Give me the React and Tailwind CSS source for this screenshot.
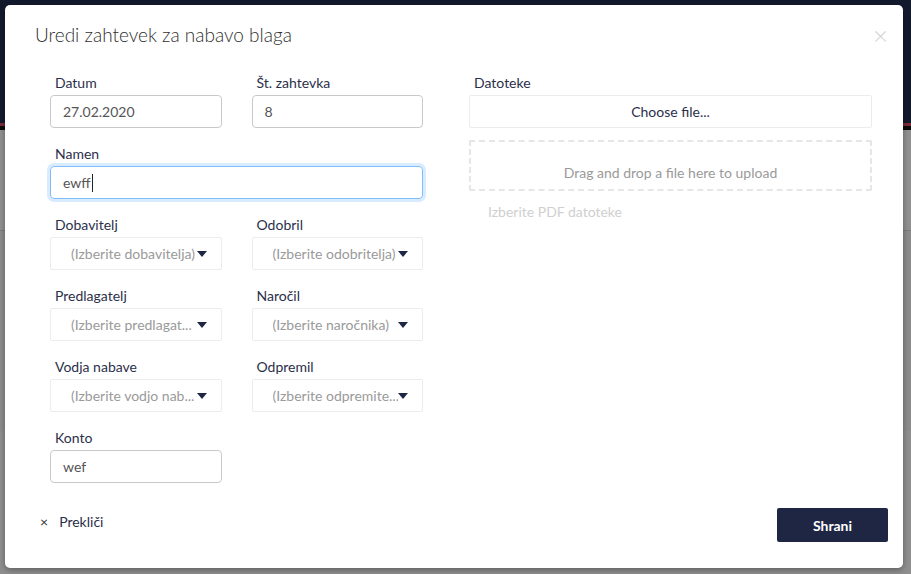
import React from "react";

function Caret() {
  return (
    <svg width="10" height="6" viewBox="0 0 10 6" className="shrink-0">
      <path d="M0 0 L10 0 L5 6 Z" fill="#1f2644" />
    </svg>
  );
}

function Field({ label, children }) {
  return (
    <div className="flex flex-col">
      <label className="pl-[5px] text-[14px] leading-[16px] text-[#2b2f4a] mb-[4px]">{label}</label>
      {children}
    </div>
  );
}

function TextInput({ value, focus }) {
  return (
    <div
      className={
        "h-[33px] rounded-[4px] border px-[12px] flex items-center text-[14px] text-[#555] " +
        (focus
          ? "border-[#80bdff] shadow-[0_0_0_3px_rgba(0,123,255,0.15)]"
          : "border-[#c9c9c9]")
      }
    >
      {value}
      {focus && <span className="w-px h-[18px] bg-[#222] ml-[1px]" />}
    </div>
  );
}

function Select({ placeholder }) {
  return (
    <div className="h-[33px] rounded-[2px] border border-[#ececec] pl-[20px] pr-[14px] flex items-center text-[14px] text-[#9a9a9a]">
      <span className="flex-1 whitespace-nowrap overflow-hidden">{placeholder}</span>
      <Caret />
    </div>
  );
}

export default function App() {
  return (
    <div
      className="relative w-[911px] h-[574px] overflow-hidden bg-[#8f8f8f]"
      style={{ fontFamily: "Lato, 'Noto Sans', sans-serif" }}
    >
      {/* backdrop page */}
      <div className="h-[123px] bg-[#141a2e]" />
      <div className="h-[3px] bg-[#7a2a38]" />
      <div className="h-[4px] bg-[#0b0b0b]" />
      <div className="h-[100px] bg-[#919191]" />
      <div className="h-px bg-[#7d7d7d]" />
      <div className="h-[200px] bg-[#8c8c8c]" />

      {/* modal */}
      <div className="absolute left-[5px] top-[5px] w-[898px] h-[563px] bg-white rounded-[5px] shadow-[0_2px_6px_rgba(0,0,0,0.35)] flex flex-col">
        <div className="flex items-start justify-between pl-[30px] pr-[15px] pt-[19px]">
          <h1 className="text-[19px] leading-[22px] text-[#2f2f2f] font-light">
            Uredi zahtevek za nabavo blaga
          </h1>
          <span className="text-[26px] leading-[22px] text-[#cfcfcf] font-light">×</span>
        </div>

        <div className="flex pl-[45px] pr-[31px] mt-[29px] gap-[46px]">
          {/* left */}
          <div className="w-[373px] flex flex-col gap-[18px]">
            <div className="grid grid-cols-2 gap-x-[30px]">
              <Field label="Datum">
                <TextInput value="27.02.2020" />
              </Field>
              <Field label="Št. zahtevka">
                <TextInput value="8" />
              </Field>
            </div>
            <Field label="Namen">
              <TextInput value="ewff" focus />
            </Field>
            <div className="grid grid-cols-2 gap-x-[30px] gap-y-[18px]">
              <Field label="Dobavitelj">
                <Select placeholder="(Izberite dobavitelja)" />
              </Field>
              <Field label="Odobril">
                <Select placeholder="(Izberite odobritelja)" />
              </Field>
              <Field label="Predlagatelj">
                <Select placeholder="(Izberite predlagat..." />
              </Field>
              <Field label="Naročil">
                <Select placeholder="(Izberite naročnika)" />
              </Field>
              <Field label="Vodja nabave">
                <Select placeholder="(Izberite vodjo nab..." />
              </Field>
              <Field label="Odpremil">
                <Select placeholder="(Izberite odpremite..." />
              </Field>
              <Field label="Konto">
                <TextInput value="wef" />
              </Field>
            </div>
          </div>

          {/* right */}
          <div className="flex-1 flex flex-col">
            <label className="pl-[5px] text-[14px] leading-[16px] text-[#2b2f4a] mb-[4px]">Datoteke</label>
            <div className="h-[33px] rounded-[2px] border border-[#ececec] flex items-center justify-center text-[14px] text-[#2b2f4a]">
              Choose file...
            </div>
            <div className="mt-[12px] h-[51px] border-2 border-dashed border-[#e6e6e6] rounded-[2px] flex items-end justify-center pb-[6px] text-[14px] text-[#9a9a9a]">
              Drag and drop a file here to upload
            </div>
            <div className="mt-[10px] pl-[19px] text-[14px] text-[#cfcfcf]">Izberite PDF datoteke</div>
          </div>
        </div>

        <div className="mt-auto mb-[26px] flex items-center justify-between pl-[35px] pr-[15px]">
          <div className="flex items-center gap-[11px] text-[14px] text-[#2b2f4a] mt-[-7px]">
            <span className="text-[14px] text-[#333]">×</span>
            <span>Prekliči</span>
          </div>
          <button className="w-[111px] h-[34px] rounded-[2px] bg-[#1f2644] text-white text-[14px] font-bold">
            Shrani
          </button>
        </div>
      </div>
    </div>
  );
}
